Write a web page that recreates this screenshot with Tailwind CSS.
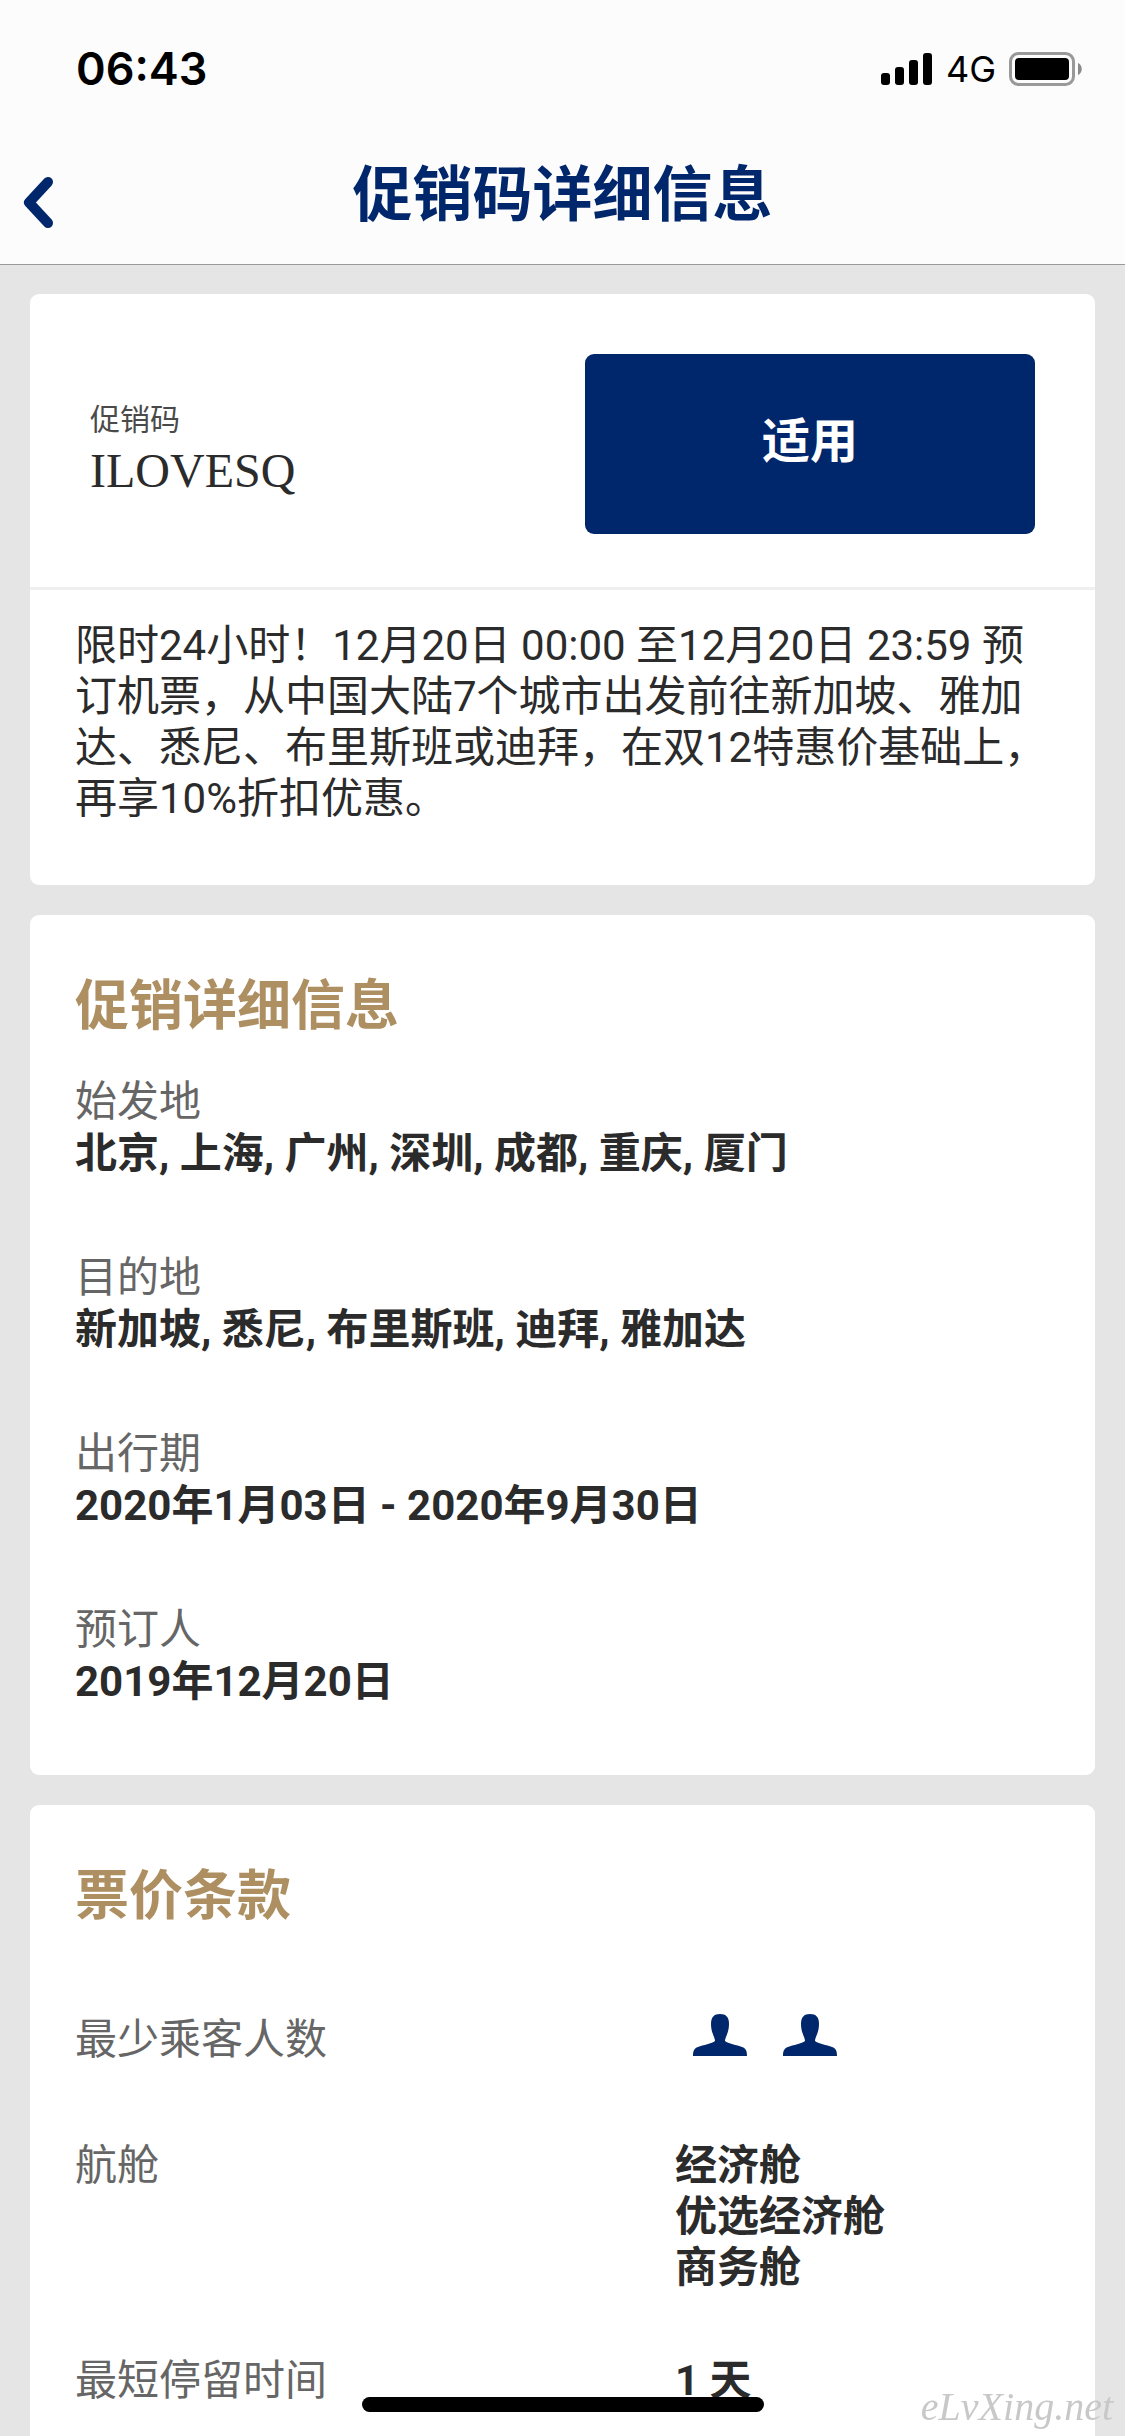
<!DOCTYPE html>
<html lang="zh-CN">
<head>
    <meta charset="UTF-8">
    <meta name="viewport" content="width=device-width, initial-scale=1.0">
    <title>促销码详细信息</title>
    <script src="https://cdn.jsdelivr.net/npm/@tailwindcss/browser@4"></script>
</head>
<body class="bg-[#e5e5e5] text-[#2b2b2b] min-h-screen flex flex-col font-['Roboto','Noto_Sans_CJK_SC',sans-serif]">
    <header class="bg-[#fcfcfc] border-b border-[#999]">
        <!-- status bar -->
        <div class="flex items-center justify-between h-[138px] pl-[76px] pr-[42px] text-black font-['Inter',sans-serif]">
            <span class="text-[45px] font-semibold">06:43</span>
            <div class="flex items-center gap-[13px]">
                <svg class="w-[52px] h-[34px]" viewBox="0 0 52 34" aria-hidden="true">
                    <rect x="0" y="21" width="9" height="12" rx="3"/>
                    <rect x="14" y="15" width="9" height="18" rx="3"/>
                    <rect x="28" y="8" width="9" height="25" rx="3"/>
                    <rect x="42" y="1" width="9" height="32" rx="3"/>
                </svg>
                <span class="text-[36px]">4G</span>
                <svg class="w-[74px] h-[34px]" viewBox="0 0 74 34" aria-hidden="true">
                    <rect x="1.5" y="1.5" width="63" height="31" rx="8" fill="none" stroke="#999" stroke-width="3"/>
                    <rect x="6" y="6" width="54" height="22" rx="4"/>
                    <path d="M69 11c5 2 5 10 0 12z" fill="#8a8a8a"/>
                </svg>
            </div>
        </div>
        <div class="grid grid-cols-[90px_1fr_90px] items-start h-[126px]">
            <button class="pl-[22px] pt-[38px]" aria-label="返回">
                <svg class="w-[31px] h-[53px]" viewBox="0 0 31 53" fill="none" stroke="#00266b" stroke-width="10" stroke-linecap="round" stroke-linejoin="round" aria-hidden="true">
                    <path d="M26 6L7 26.500L26 47"/>
                </svg>
            </button>
            <h1 class="text-[60px] leading-[84px] pt-4 font-bold text-center text-[#00266b]">促销码详细信息</h1>
        </div>
    </header>

    <main class="flex-1 flex flex-col gap-[30px] px-[30px] pt-[29px]">
        <section class="bg-white rounded-[9px]">
            <div class="flex items-center justify-between pt-[60px] pb-[53px] px-[60px] border-b-[3px] border-[#efefef]">
                <div class="pt-2">
                    <p class="text-[30px] leading-[45px] text-[#4a4a4a]">促销码</p>
                    <p class="text-[48px] leading-[58px] font-['Liberation_Serif',serif]">ILOVESQ</p>
                </div>
                <button class="w-[450px] h-[180px] pb-1 rounded-[9px] bg-[#00266b] text-white text-[48px] font-bold">适用</button>
            </div>
            <p class="text-[42px] leading-[51px] px-[45px] pt-[30px] pb-[61px]">限时24小时！12月20日 00:00 至12月20日 23:59 预订机票，从中国大陆7个城市出发前往新加坡、雅加达、悉尼、布里斯班或迪拜，在双12特惠价基础上，再享10%折扣优惠。</p>
        </section>

        <section class="bg-white rounded-[9px] px-[45px] pt-[53px] pb-[68px]">
            <h2 class="text-[54px] leading-[78px] font-bold text-[#ad8f62]">促销详细信息</h2>
            <dl class="flex flex-col gap-[73px] pt-[30px] text-[42px] leading-[51px]">
                <div>
                    <dt class="leading-[52px] text-[#666]">始发地</dt>
                    <dd class="font-bold">北京, 上海, 广州, 深圳, 成都, 重庆, 厦门</dd>
                </div>
                <div>
                    <dt class="leading-[52px] text-[#666]">目的地</dt>
                    <dd class="font-bold">新加坡, 悉尼, 布里斯班, 迪拜, 雅加达</dd>
                </div>
                <div>
                    <dt class="leading-[52px] text-[#666]">出行期</dt>
                    <dd class="font-bold">2020年1月03日 - 2020年9月30日</dd>
                </div>
                <div>
                    <dt class="leading-[52px] text-[#666]">预订人</dt>
                    <dd class="font-bold">2019年12月20日</dd>
                </div>
            </dl>
        </section>

        <section class="flex-1 bg-white rounded-t-[9px] px-[45px] pt-[53px]">
            <h2 class="text-[54px] leading-[78px] font-bold text-[#ad8f62]">票价条款</h2>
            <dl class="grid grid-cols-[600px_1fr] pt-[78px] text-[42px] leading-[51px]">
                <dt class="pb-[75px] text-[#666]">最少乘客人数</dt>
                <dd class="flex gap-9 pl-[18px]" aria-label="2">
                    <svg class="w-[54px] h-[42px]" viewBox="0 0 54 42" fill="#00266b" aria-hidden="true">
                        <path d="M0 42C0 37 1 34.500 5 33C10 31 19 29.500 22 27C22 23 18 19 18 10C18 3 21 0 27 0S36 3 36 10C36 19 32 23 32 27C35 29.500 44 31 49 33C53 34.500 54 37 54 42Z"/>
                    </svg>
                    <svg class="w-[54px] h-[42px]" viewBox="0 0 54 42" fill="#00266b" aria-hidden="true">
                        <path d="M0 42C0 37 1 34.500 5 33C10 31 19 29.500 22 27C22 23 18 19 18 10C18 3 21 0 27 0S36 3 36 10C36 19 32 23 32 27C35 29.500 44 31 49 33C53 34.500 54 37 54 42Z"/>
                    </svg>
                </dd>
                <dt class="text-[#666]">航舱</dt>
                <dd class="pb-[62px] font-bold">经济舱<br>优选经济舱<br>商务舱</dd>
                <dt class="text-[#666]">最短停留时间</dt>
                <dd class="font-bold">1 天</dd>
            </dl>
        </section>
    </main>

    <!-- home indicator and site mark -->
    <div class="fixed bottom-6 left-1/2 -translate-x-1/2 w-[402px] h-[15px] rounded-full bg-black"></div>
    <span class="fixed bottom-1 right-3 text-[40px] leading-[51px] italic text-[#c8c8c8] font-['Liberation_Serif',serif]">eLvXing.net</span>
</body>
</html>
